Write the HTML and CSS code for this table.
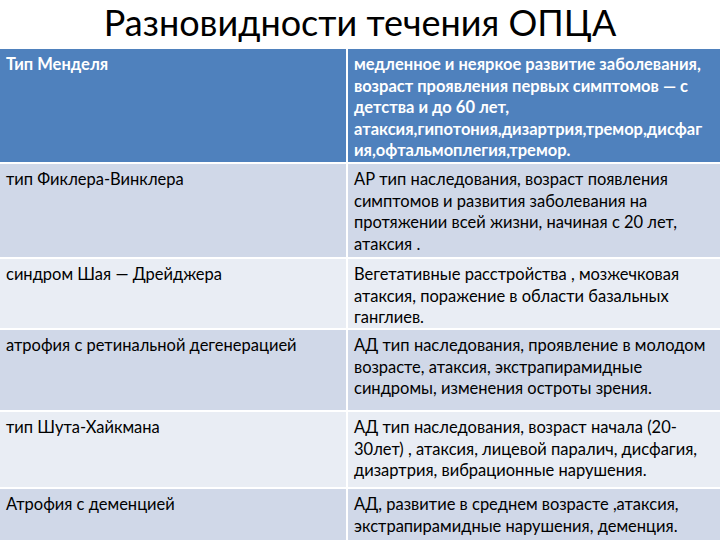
FILE: index.html
```html
<!DOCTYPE html>
<html lang="ru">
<head>
<meta charset="utf-8">
<link rel="stylesheet" href="styles.css">
</head>
<body>
<h1 class="title">Разновидности течения ОПЦА</h1>
<div class="table">
  <div class="cell head">Тип Менделя</div>
  <div class="cell head">медленное и неяркое развитие заболевания,<br>возраст проявления первых симптомов — с<br>детства и до 60 лет,<br>атаксия,гипотония,дизартрия,тремор,дисфаг<br>ия,офтальмоплегия,тремор.</div>

  <div class="cell odd">тип Фиклера-Винклера</div>
  <div class="cell odd">АР тип наследования, возраст появления<br>симптомов и развития заболевания на<br>протяжении всей жизни, начиная с 20 лет,<br>атаксия .</div>

  <div class="cell even">синдром Шая — Дрейджера</div>
  <div class="cell even">Вегетативные расстройства , мозжечковая<br>атаксия, поражение в области базальных<br>ганглиев.</div>

  <div class="cell odd">атрофия с ретинальной дегенерацией</div>
  <div class="cell odd">АД тип наследования, проявление в молодом<br>возрасте, атаксия, экстрапирамидные<br>синдромы, изменения остроты зрения.</div>

  <div class="cell even">тип Шута-Хайкмана</div>
  <div class="cell even">АД тип наследования, возраст начала (20-<br>30лет) , атаксия, лицевой паралич, дисфагия,<br>дизартрия, вибрационные нарушения.</div>

  <div class="cell odd">Атрофия с деменцией</div>
  <div class="cell odd">АД, развитие в среднем возрасте ,атаксия,<br>экстрапирамидные нарушения, деменция.</div>
</div>
</body>
</html>
```
FILE: styles.css
```css
html, body {
  margin: 0;
  padding: 0;
  background: #ffffff;
}
body {
  width: 720px;
  height: 540px;
  overflow: hidden;
  font-family: Lato, "Open Sans", sans-serif;
}
.title {
  margin: 0;
  height: 49px;
  font-weight: 400;
  font-size: 36px;
  line-height: 44px;
  text-align: center;
  color: #000;
}
.table {
  display: grid;
  grid-template-columns: 346px 1fr;
  grid-template-rows: 113px 93px 69px 80px 75px 60px;
  column-gap: 2px;
  row-gap: 2px;
  background: #ffffff;
}
.cell {
  padding: 5px 4px 0 6px;
  font-size: 16.5px;
  line-height: 21.5px;
  color: #000;
  white-space: nowrap;
}
.head {
  background: #4f81bd;
  color: #fff;
  font-weight: 700;
  font-size: 16.5px;
}
.odd {
  background: #d0d8e8;
}
.even {
  background: #e9edf4;
}
```
